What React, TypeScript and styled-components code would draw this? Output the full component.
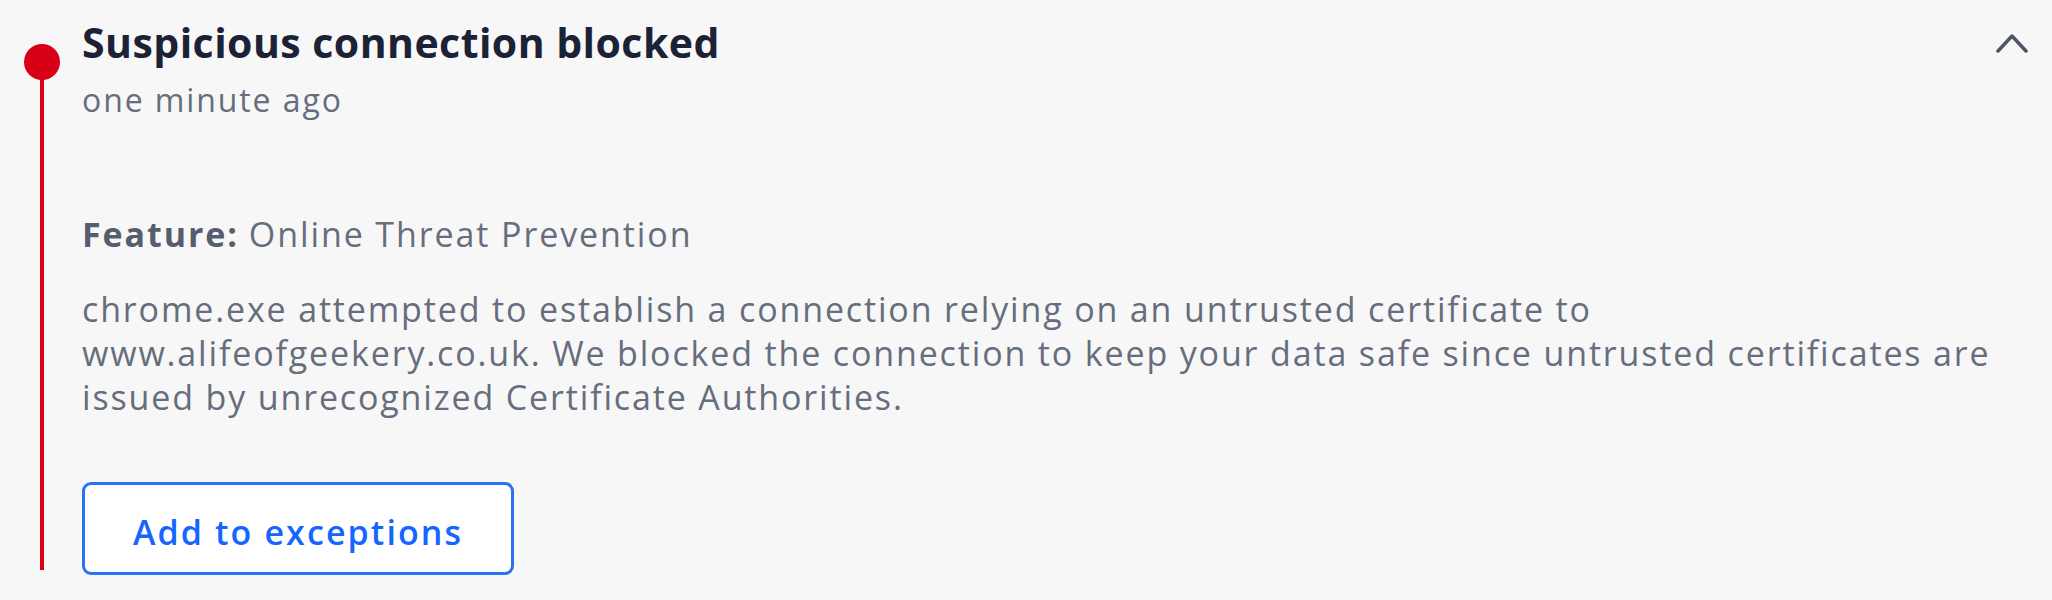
import React from 'react';
import styled, { createGlobalStyle } from 'styled-components';

const GlobalStyle = createGlobalStyle`
  html, body {
    margin: 0;
    padding: 0;
    background: #f7f7f7;
  }
  body {
    font-family: "Open Sans", "Noto Sans", "Liberation Sans", sans-serif;
  }
`;

const Page = styled.div`
  height: 600px;
  box-sizing: border-box;
  padding: 0 24px;
  background: #f7f7f7;
  display: flex;
  overflow: hidden;
`;

const Timeline = styled.div`
  width: 36px;
  flex-shrink: 0;
  display: flex;
  flex-direction: column;
  align-items: center;
  padding-top: 44px;
  margin-right: 22px;
`;

const Dot = styled.div`
  width: 36px;
  height: 36px;
  border-radius: 50%;
  background: #d70016;
  flex-shrink: 0;
`;

const Line = styled.div`
  width: 4px;
  height: 492px;
  margin-top: -2px;
  background: #d70016;
`;

const Body = styled.div`
  flex: 1;
  display: flex;
  flex-direction: column;
  align-items: flex-start;
`;

const HeaderRow = styled.div`
  align-self: stretch;
  display: flex;
  justify-content: space-between;
  align-items: flex-start;
`;

const Title = styled.h2`
  margin: 16px 0 0 0;
  font-size: 41px;
  line-height: 52px;
  font-weight: 700;
  letter-spacing: 0.45px;
  color: #1c2236;
`;

const Chevron = styled.button`
  background: none;
  border: none;
  padding: 0;
  margin: 33px 0 0 0;
  display: flex;
  color: #4d5567;
  cursor: pointer;
`;

const Meta = styled.div<{ $gap: number; $size?: number }>`
  margin-top: ${p => p.$gap}px;
  font-size: ${p => p.$size ?? 34}px;
  line-height: 44px;
  letter-spacing: 1.9px;
  color: #666d7c;
`;

const Label = styled.span`
  font-weight: 700;
  color: #565d6d;
  margin-right: 10px;
`;

const Description = styled.p`
  margin: 31px 0 0 0;
  font-size: 34px;
  line-height: 44px;
  letter-spacing: 1.85px;
  color: #666d7c;
  white-space: nowrap;
`;

const OutlineButton = styled.button`
  margin-top: 63px;
  height: 93px;
  box-sizing: border-box;
  padding: 6px 48px 0;
  display: inline-flex;
  align-items: center;
  background: #ffffff;
  border: 3px solid #2a72f5;
  border-radius: 9px;
  font-family: inherit;
  font-size: 34px;
  font-weight: 600;
  letter-spacing: 2.1px;
  color: #1565ff;
  cursor: pointer;
`;

const ChevronUp = () => (
  <svg width="32" height="20" viewBox="0 0 32 20" fill="none">
    <path d="M2 18 L16 3 L30 18" stroke="currentColor" strokeWidth="3.5" strokeLinecap="round" strokeLinejoin="round" />
  </svg>
);

export default function App() {
  return (
    <>
      <GlobalStyle />
      <Page>
        <Timeline>
          <Dot />
          <Line />
        </Timeline>
        <Body>
          <HeaderRow>
            <div>
              <Title>Suspicious connection blocked</Title>
              <Meta $gap={10} $size={32}>one minute ago</Meta>
            </div>
            <Chevron aria-label="Collapse">
              <ChevronUp />
            </Chevron>
          </HeaderRow>
          <Meta $gap={90}>
            <Label>Feature:</Label>Online Threat Prevention
          </Meta>
          <Description>
            chrome.exe attempted to establish a connection relying on an untrusted certificate to
            <br />
            www.alifeofgeekery.co.uk. We blocked the connection to keep your data safe since untrusted certificates are
            <br />
            issued by unrecognized Certificate Authorities.
          </Description>
          <OutlineButton>Add to exceptions</OutlineButton>
        </Body>
      </Page>
    </>
  );
}
